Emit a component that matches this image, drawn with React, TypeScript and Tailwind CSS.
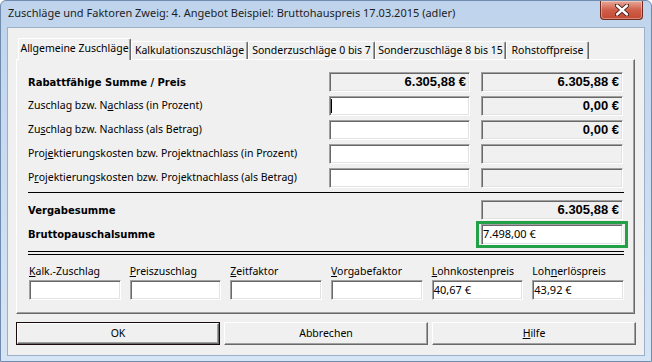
import React from 'react'

// classic win 3d edges
const sunken =
  'border border-t-[#a0a0a0] border-l-[#a0a0a0] border-r-white border-b-white shadow-[inset_1px_1px_0_#696969,inset_-1px_-1px_0_#e3e3e3]'
const raised =
  'border border-t-white border-l-white border-r-[#696969] border-b-[#696969] shadow-[inset_-1px_-1px_0_#a0a0a0]'

const boldLabel = "font-['DejaVu_Sans',sans-serif] font-bold text-[10px]"
const value = "font-['Liberation_Sans',Arial,sans-serif] font-bold text-[13px]"

const tabs = [
  { label: 'Allgemeine Zuschläge', w: 'w-[113px]', active: true },
  { label: 'Kalkulationszuschläge', w: 'w-[117px]', active: false },
  { label: 'Sonderzuschläge 0 bis 7', w: 'w-[127px]', active: false },
  { label: 'Sonderzuschläge 8 bis 15', w: 'w-[131px]', active: false },
  { label: 'Rohstoffpreise', w: 'w-[83px]', active: false },
]

function Box({ white, children, right, className = '' }: { white?: boolean; children?: React.ReactNode; right?: boolean; className?: string }) {
  return (
    <div
      className={`h-[20px] flex items-center ${right ? 'justify-end pr-[3px]' : 'pl-[1px]'} ${white ? 'bg-white' : 'bg-[#f0f0f0]'} ${sunken} ${className}`}
    >
      {children}
    </div>
  )
}

function Label({ children }: { children: React.ReactNode }) {
  return <div className="flex items-center h-[20px] whitespace-nowrap">{children}</div>
}

const bottomFields = [
  { label: <><u>K</u>alk.-Zuschlag</>, val: '' },
  { label: <><u>P</u>reiszuschlag</>, val: '' },
  { label: <><u>Z</u>eitfaktor</>, val: '' },
  { label: <><u>V</u>orgabefaktor</>, val: '' },
  { label: <><u>L</u>ohnkostenpreis</>, val: '40,67 €' },
  { label: <>Loh<u>n</u>erlöspreis</>, val: '43,92 €' },
]

export default function App() {
  return (
    <div className="w-[652px] h-[362px] flex flex-col px-[6px] pb-[5px] rounded-t-[6px] border border-[#6f8bad] bg-gradient-to-b from-[#bfd4ec] to-[#d6e5f5] font-['Noto_Sans',sans-serif] text-[10.5px] text-black overflow-hidden">
      {/* Title bar */}
      <div className="flex h-[26px] shrink-0">
        <div className="mt-[4px] pl-[1px] leading-[16px] text-[11px] text-[#1e1e1e] whitespace-nowrap">
          Zuschläge und Faktoren Zweig: 4. Angebot Beispiel: Bruttohauspreis 17.03.2015 (adler)
        </div>
        <div className="ml-auto mr-[2px] w-[43px] h-[19px] rounded-b-[4px] border border-t-0 border-[#6e2a20] bg-gradient-to-b from-[#e7a898] via-[#cf5e4a] to-[#c44a33] flex items-center justify-center shadow-[inset_0_0_0_1px_rgba(255,255,255,0.35)]">
          <svg width="14" height="12" viewBox="0 0 14 12">
            <path d="M2 1.5 L12 10.5 M12 1.5 L2 10.5" stroke="#3d1710" strokeWidth="4.2" strokeLinecap="round" />
            <path d="M2 1.5 L12 10.5 M12 1.5 L2 10.5" stroke="#ffffff" strokeWidth="2.4" strokeLinecap="round" />
          </svg>
        </div>
      </div>

      {/* Client */}
      <div className="flex-1 flex flex-col border border-[#9bb0c9] bg-[#f0f0f0] pt-[10px] px-[8px]">
        {/* Tabs */}
        <div className="flex items-end pl-[2px] relative z-10">
          {tabs.map(t => (
            <div
              key={t.label}
              className={`${t.w} flex items-center justify-center whitespace-nowrap border border-b-0 border-t-white border-l-white border-r-[#696969] shadow-[inset_-1px_0_0_#a0a0a0] rounded-t-[2px] bg-[#f0f0f0] ${
                t.active ? 'h-[22px] -mb-px pb-[2px]' : 'h-[18px]'
              }`}
            >
              {t.label}
            </div>
          ))}
        </div>

        {/* Panel */}
        <div className={`w-[619px] h-[255px] ${raised} pl-[11px] pr-[10px] pt-[12px]`}>
          <div className="grid grid-cols-[290px_141px_142px] gap-x-[11px] gap-y-[4px]">
            <Label><span className={boldLabel}>Rabattfähige Summe / Preis</span></Label>
            <Box right><span className={value}>6.305,88 €</span></Box>
            <Box right><span className={value}>6.305,88 €</span></Box>

            <Label>Zuschlag bzw. N<u>a</u>chlass (in Prozent)</Label>
            <Box white><div className="w-px h-[14px] bg-black" /></Box>
            <Box right><span className={value}>0,00 €</span></Box>

            <Label>Zu<u>s</u>chlag bzw. Nachlass (als Betrag)</Label>
            <Box white />
            <Box right><span className={value}>0,00 €</span></Box>

            <Label>Proj<u>e</u>ktierungskosten bzw. Projektnachlass (in Prozent)</Label>
            <Box white />
            <Box />

            <Label>P<u>r</u>ojektierungskosten bzw. Projektnachlass (als Betrag)</Label>
            <Box white />
            <Box />
          </div>

          <div className="mt-[4px] h-px bg-black" />

          <div className="mt-[7px] grid grid-cols-[290px_141px_142px] gap-x-[11px] gap-y-[4px]">
            <Label><span className={boldLabel}>Vergabesumme</span></Label>
            <div />
            <Box right><span className={value}>6.305,88 €</span></Box>

            <div className="flex items-center h-[21px]"><span className={boldLabel}>Bruttopauschalsumme</span></div>
            <div />
            <div className="relative">
              <Box white className="h-[21px] text-[11px]">7.498,00 €</Box>
              <div className="absolute -left-[5px] -right-[5px] -top-[3px] -bottom-[3px] border-[3px] border-[#23a048] pointer-events-none" />
            </div>
          </div>

          <div className="mt-[6px] h-px bg-black" />
          <div className="mt-[2px] h-px bg-black" />

          <div className="mt-[8px] ml-[1px] grid grid-cols-6 gap-x-[9px]">
            {bottomFields.map((f, i) => (
              <div key={i} className="flex flex-col">
                <div className="leading-[16px] whitespace-nowrap">{f.label}</div>
                <Box white className="mt-[1px] text-[11px]">{f.val}</Box>
              </div>
            ))}
          </div>
        </div>

        {/* Buttons */}
        <div className="mt-[8px] flex gap-[4px]">
          <div className="w-[204px] h-[23px] border border-[#1a0c0c]">
            <div className={`h-full flex items-center justify-center ${raised}`}>OK</div>
          </div>
          <div className={`w-[204px] h-[23px] flex items-center justify-center ${raised}`}>Abbrechen</div>
          <div className={`w-[204px] h-[23px] flex items-center justify-center ${raised}`}>
            <span><u>H</u>ilfe</span>
          </div>
        </div>
      </div>
    </div>
  )
}
